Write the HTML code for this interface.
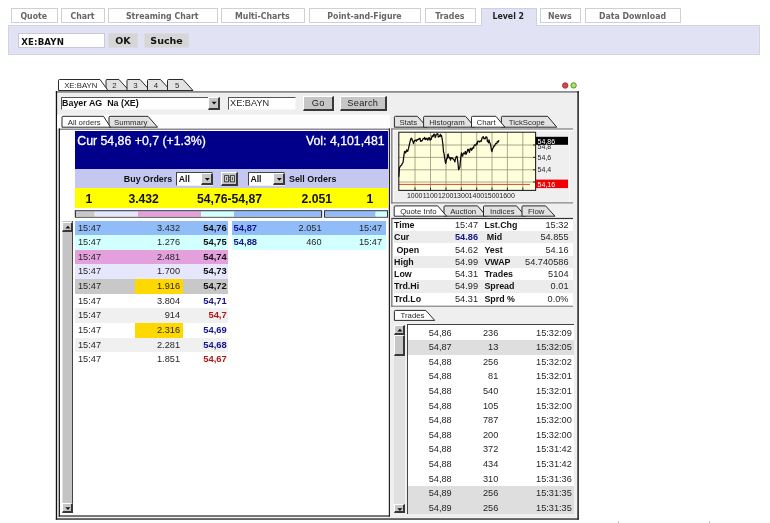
<!DOCTYPE html>
<html><head><meta charset="utf-8"><title>Level 2</title>
<style>
html,body{margin:0;padding:0;background:#fff;}
body{filter:blur(0.4px);width:770px;height:523px;position:relative;overflow:hidden;font-family:"Liberation Sans",sans-serif;font-size:9.2px;color:#222;}
.a{position:absolute;box-sizing:border-box;white-space:nowrap;}
.nt{border:1px solid #cfcfd6;background:#fff;font-family:"DejaVu Sans Condensed","DejaVu Sans",sans-serif;font-weight:bold;font-size:8.7px;color:#666;text-align:center;line-height:15.4px;text-indent:-1px;}
.nt.on{background:#e2e2f5;border-color:#cfcfe2;border-bottom:none;color:#222;}
.vb{font-family:"DejaVu Sans",sans-serif;font-weight:bold;font-size:8.6px;color:#111;}
.btn{background:#c6c6c6;border-top:1px solid #fff;border-left:1px solid #fff;border-right:2px solid #383838;border-bottom:2px solid #383838;text-align:center;color:#222;}
.r{text-align:right;}
.b{font-weight:bold;}
.row{left:0;width:100%;}
svg{position:absolute;overflow:visible;}
svg text{font-family:"Liberation Sans",sans-serif;}
</style></head><body>

<div class="a " style="left:8px;top:24.5px;width:751.5px;height:30.5px;background:#e2e2f5;border:1px solid #d2d2e6;"></div>
<div class="a nt" style="left:11px;top:7.5px;width:46.5px;height:15.2px;">Quote</div>
<div class="a nt" style="left:61.3px;top:7.5px;width:43.4px;height:15.2px;">Chart</div>
<div class="a nt" style="left:108px;top:7.5px;width:109.5px;height:15.2px;">Streaming Chart</div>
<div class="a nt" style="left:221px;top:7.5px;width:83.7px;height:15.2px;">Multi-Charts</div>
<div class="a nt" style="left:309px;top:7.5px;width:112px;height:15.2px;">Point-and-Figure</div>
<div class="a nt" style="left:424.7px;top:7.5px;width:51.3px;height:15.2px;">Trades</div>
<div class="a nt on" style="left:481px;top:7.5px;width:55.5px;height:18.5px;">Level 2</div>
<div class="a nt" style="left:540px;top:7.5px;width:40.5px;height:15.2px;">News</div>
<div class="a nt" style="left:585px;top:7.5px;width:96px;height:15.2px;">Data Download</div>
<div class="a vb" style="left:17.7px;top:33px;width:87.3px;height:15.4px;background:#fff;border:1px solid #c8c8d8;padding-left:2.6px;line-height:17.6px;letter-spacing:0.15px;">XE:BAYN</div>
<div class="a vb" style="left:108px;top:32.6px;width:29.8px;height:15.6px;background:#d6d6d6;border:1px solid #dadae2;text-align:center;line-height:14.6px;font-size:9.5px;">OK</div>
<div class="a vb" style="left:144.4px;top:32.6px;width:44.4px;height:15.6px;background:#d6d6d6;border:1px solid #dadae2;text-align:center;line-height:14.6px;font-size:9.5px;">Suche</div>
<svg style="left:560px;top:80px" width="20" height="12"><circle cx="5.2" cy="5.5" r="2.7" fill="#e04048" stroke="#b03038" stroke-width="1"/><circle cx="13.6" cy="5.4" r="2.7" fill="#a8e468" stroke="#5c9028" stroke-width="1"/></svg>
<svg style="left:0;top:0" width="770" height="523"><rect x="56" y="91.2" width="522.6" height="428.3" fill="#efefef"/><rect x="55.8" y="91.1" width="523.0" height="1.6" fill="#808080"/><rect x="55.8" y="91.1" width="1.3" height="428.6" fill="#111"/><rect x="577.4" y="91.1" width="1.4" height="428.6" fill="#111"/><rect x="55.8" y="518.4" width="523.0" height="1.3" fill="#222"/></svg>
<svg style="left:0;top:0" width="770" height="523"><path d="M106 90.5 L106 80.5 Q106 79.5 107 79.5 L119 79.5 L129 90.5 Z" fill="#e2e2e2" stroke="#2a2a2a" stroke-width="1"/><path d="M127 90.5 L127 80.5 Q127 79.5 128 79.5 L140 79.5 L150 90.5 Z" fill="#e2e2e2" stroke="#2a2a2a" stroke-width="1"/><path d="M147.5 90.5 L147.5 80.5 Q147.5 79.5 148.5 79.5 L160.5 79.5 L170.5 90.5 Z" fill="#e2e2e2" stroke="#2a2a2a" stroke-width="1"/><path d="M167.5 90.5 L167.5 80.5 Q167.5 79.5 168.5 79.5 L183 79.5 L193 90.5 Z" fill="#e2e2e2" stroke="#2a2a2a" stroke-width="1"/><path d="M58.5 90.5 L58.5 80.5 Q58.5 79.5 59.5 79.5 L100 79.5 L108 90.5 Z" fill="#fff" stroke="#2a2a2a" stroke-width="1"/><text x="80.75" y="87.9" font-size="7.8" text-anchor="middle" letter-spacing="0" fill="#2a2a2a">XE:BAYN</text><text x="114.3" y="87.9" font-size="7.8" text-anchor="middle" letter-spacing="0" fill="#2a2a2a">2</text><text x="135.3" y="87.9" font-size="7.8" text-anchor="middle" letter-spacing="0" fill="#2a2a2a">3</text><text x="155.8" y="87.9" font-size="7.8" text-anchor="middle" letter-spacing="0" fill="#2a2a2a">4</text><text x="177.05" y="87.9" font-size="7.8" text-anchor="middle" letter-spacing="0" fill="#2a2a2a">5</text></svg>
<div class="a " style="left:60.5px;top:96.5px;width:159.5px;height:13.5px;background:#fff;border-top:1.5px solid #555;border-left:1.5px solid #555;border-bottom:1px solid #f6f6f6;border-right:1px solid #f6f6f6;padding-left:0.6px;line-height:11.5px;font-size:8.9px;font-weight:bold;color:#111;">Bayer AG&nbsp; Na (XE)</div>
<div class="a btn" style="left:207.6px;top:97px;width:12.4px;height:12.8px;"><svg width="11" height="11" style="left:0;top:0"><path d="M2.6 3.8 L7.6 3.8 L5.1 6.6 Z" fill="#111"/></svg></div>
<div class="a " style="left:227.5px;top:96.5px;width:68.5px;height:13.5px;background:#fff;border-top:1.5px solid #555;border-left:1.5px solid #555;border-bottom:1px solid #f6f6f6;border-right:1px solid #f6f6f6;padding-left:1.5px;line-height:11.5px;font-size:9.2px;color:#262626;">XE:BAYN</div>
<div class="a btn" style="left:303px;top:95.6px;width:31.4px;height:15.2px;line-height:12px;font-size:9.2px;letter-spacing:0.3px;">Go</div>
<div class="a btn" style="left:340px;top:95.6px;width:46.6px;height:15.2px;line-height:12px;font-size:9.2px;letter-spacing:0.3px;">Search</div>
<svg style="left:0;top:0" width="770" height="523"><rect x="57.1" y="114.6" width="332.9" height="14.0" fill="#fdfdfd"/></svg>
<svg style="left:0;top:0" width="770" height="523"><path d="M109 127.2 L109 117.3 Q109 116.3 110 116.3 L148 116.3 L157.6 127.2 Z" fill="#e2e2e2" stroke="#2a2a2a" stroke-width="1"/><path d="M62 127.2 L62 117.3 Q62 116.3 63 116.3 L103.5 116.3 L110.5 127.2 Z" fill="#fff" stroke="#2a2a2a" stroke-width="1"/><text x="84.25" y="124.60000000000001" font-size="7.8" text-anchor="middle" letter-spacing="0" fill="#2a2a2a">All orders</text><text x="130.7" y="124.60000000000001" font-size="7.8" text-anchor="middle" letter-spacing="0" fill="#2a2a2a">Summary</text></svg>
<svg style="left:0;top:0" width="770" height="523"><rect x="59" y="128.5" width="331" height="388.1" fill="#fff"/><rect x="58.7" y="128.5" width="331.3" height="1.5" fill="#8c8c8c"/><rect x="58.7" y="128.5" width="1.3" height="388.1" fill="#222"/><rect x="388.8" y="128.5" width="1.2" height="388.1" fill="#222"/><rect x="58.7" y="515.4" width="331.3" height="1.2" fill="#222"/></svg>
<div class="a " style="left:74.8px;top:130.6px;width:313.2px;height:38.4px;background:#00008b;"></div>
<div class="a " style="left:77.3px;top:133.6px;width:172.7px;height:16.4px;color:#fff;font-size:12.3px;line-height:14px;-webkit-text-stroke:0.3px #fff;">Cur 54,86 +0,7 (+1.3%)</div>
<div class="a " style="left:250px;top:133.6px;width:134.6px;height:16.4px;color:#fff;font-size:12.3px;line-height:14px;text-align:right;-webkit-text-stroke:0.3px #fff;">Vol: 4,101,481</div>
<div class="a " style="left:74.8px;top:169px;width:313.2px;height:19px;background:#c4c8f0;"></div>
<div class="a " style="left:100px;top:172.5px;width:72.2px;height:13.5px;font-weight:bold;font-size:8.9px;line-height:13px;text-align:right;color:#111;">Buy Orders</div>
<div class="a " style="left:289px;top:172.5px;width:71px;height:13.5px;font-weight:bold;font-size:8.9px;line-height:13px;color:#111;">Sell Orders</div>
<div class="a " style="left:176.3px;top:172px;width:37.0px;height:14px;background:#fff;border-top:1.5px solid #444;border-left:1.5px solid #444;border-bottom:1px solid #eee;border-right:1px solid #eee;padding-left:1.4px;line-height:12.2px;font-size:8.7px;font-weight:bold;color:#111;">All</div><div class="a btn" style="left:200.8px;top:173.2px;width:12.0px;height:12.1px;"><svg width="11" height="11" style="left:0;top:0"><path d="M2.8 4 L7.8 4 L5.3 6.8 Z" fill="#111"/></svg></div>
<div class="a " style="left:248px;top:172px;width:37.3px;height:14px;background:#fff;border-top:1.5px solid #444;border-left:1.5px solid #444;border-bottom:1px solid #eee;border-right:1px solid #eee;padding-left:1.4px;line-height:12.2px;font-size:8.7px;font-weight:bold;color:#111;">All</div><div class="a btn" style="left:272.8px;top:173.2px;width:12.0px;height:12.1px;"><svg width="11" height="11" style="left:0;top:0"><path d="M2.8 4 L7.8 4 L5.3 6.8 Z" fill="#111"/></svg></div>
<div class="a btn" style="left:221px;top:172.3px;width:16.8px;height:13.5px;"><svg width="15" height="12" style="left:0;top:0"><g fill="#d8d8d8" stroke="#333" stroke-width="0.9"><rect x="2.6" y="2.6" width="4" height="6.2"/><rect x="8.4" y="2.6" width="4" height="6.2"/><path d="M6.6 4.4h1.8M6.6 7h1.8M4.6 4.2v3M10.4 4.2v3"/></g></svg></div>
<div class="a " style="left:74.8px;top:188px;width:313.2px;height:19.8px;background:#ffff00;"></div>
<div class="a" style="font-weight:bold;font-size:12.2px;line-height:19.5px;color:#111;top:190px;left:75px;width:28px;text-align:center;">1</div>
<div class="a" style="font-weight:bold;font-size:12.2px;line-height:19.5px;color:#111;top:190px;left:128.4px;">3.432</div>
<div class="a" style="font-weight:bold;font-size:12.2px;line-height:19.5px;color:#111;top:190px;left:197px;">54,76-54,87</div>
<div class="a" style="font-weight:bold;font-size:12.2px;line-height:19.5px;color:#111;top:190px;left:301.6px;">2.051</div>
<div class="a" style="font-weight:bold;font-size:12.2px;line-height:19.5px;color:#111;top:190px;left:356px;width:28px;text-align:center;">1</div>
<svg style="left:0;top:0" width="770" height="523"><rect x="74.8" y="210.2" width="247.4" height="7.5" fill="#333"/><rect x="76.0" y="211.5" width="245.0" height="5.1" fill="#fff"/></svg><svg style="left:0;top:0" width="770" height="523"><rect x="76" y="211.5" width="18.6" height="5.1" fill="#c8c8c8"/></svg><svg style="left:0;top:0" width="770" height="523"><rect x="94.6" y="211.5" width="43.4" height="5.1" fill="#e6e6fc"/></svg><svg style="left:0;top:0" width="770" height="523"><rect x="138" y="211.5" width="63" height="5.1" fill="#e4a0dc"/></svg><svg style="left:0;top:0" width="770" height="523"><rect x="201" y="211.5" width="33" height="5.1" fill="#d2ffff"/></svg><svg style="left:0;top:0" width="770" height="523"><rect x="234" y="211.5" width="87" height="5.1" fill="#90bcf8"/></svg>
<svg style="left:0;top:0" width="770" height="523"><rect x="324" y="210.2" width="64" height="7.5" fill="#333"/><rect x="325.2" y="211.5" width="61.6" height="5.1" fill="#fff"/></svg><svg style="left:0;top:0" width="770" height="523"><rect x="325" y="211.5" width="50.6" height="5.1" fill="#90bcf8"/></svg><svg style="left:0;top:0" width="770" height="523"><rect x="375.6" y="211.5" width="11.4" height="5.1" fill="#d2ffff"/></svg>
<div class="a " style="left:61.6px;top:221px;width:11.4px;height:292px;background:#c4c4c4;border-right:1.5px solid #444;border-left:1px solid #ddd;"></div>
<div class="a btn" style="left:61.6px;top:221.5px;width:11.4px;height:10.0px;"><svg width="10" height="9" style="left:0;top:0"><path d="M2.4 5.6 L7.4 5.6 L4.9 2.8 Z" fill="#111"/></svg></div>
<div class="a btn" style="left:61.6px;top:502.6px;width:11.4px;height:10.0px;"><svg width="10" height="9" style="left:0;top:0"><path d="M2.4 3.2 L7.4 3.2 L4.9 6 Z" fill="#111"/></svg></div>
<div class="a " style="left:75px;top:220.5px;width:153.4px;height:14.63px;background:#90bcf8;"></div>
<div class="a" style="top:220.5px;line-height:14.63px;font-size:9.2px;color:#262626;left:78px;">15:47</div>
<div class="a r" style="top:220.5px;line-height:14.63px;font-size:9.2px;color:#262626;left:130px;width:50px;">3.432</div>
<div class="a r b" style="top:220.5px;line-height:14.63px;font-size:9.2px;color:#262626;left:190px;width:36.7px;font-size:9.4px;color:#111;">54,76</div>
<div class="a " style="left:75px;top:235.13px;width:153.4px;height:14.63px;background:#d2ffff;"></div>
<div class="a" style="top:235.13px;line-height:14.63px;font-size:9.2px;color:#262626;left:78px;">15:47</div>
<div class="a r" style="top:235.13px;line-height:14.63px;font-size:9.2px;color:#262626;left:130px;width:50px;">1.276</div>
<div class="a r b" style="top:235.13px;line-height:14.63px;font-size:9.2px;color:#262626;left:190px;width:36.7px;font-size:9.4px;color:#111;">54,75</div>
<div class="a " style="left:75px;top:249.76px;width:153.4px;height:14.63px;background:#e4a0dc;"></div>
<div class="a" style="top:249.76px;line-height:14.63px;font-size:9.2px;color:#262626;left:78px;">15:47</div>
<div class="a r" style="top:249.76px;line-height:14.63px;font-size:9.2px;color:#262626;left:130px;width:50px;">2.481</div>
<div class="a r b" style="top:249.76px;line-height:14.63px;font-size:9.2px;color:#262626;left:190px;width:36.7px;font-size:9.4px;color:#111;">54,74</div>
<div class="a " style="left:75px;top:264.39px;width:153.4px;height:14.63px;background:#e6e6fc;"></div>
<div class="a" style="top:264.39px;line-height:14.63px;font-size:9.2px;color:#262626;left:78px;">15:47</div>
<div class="a r" style="top:264.39px;line-height:14.63px;font-size:9.2px;color:#262626;left:130px;width:50px;">1.700</div>
<div class="a r b" style="top:264.39px;line-height:14.63px;font-size:9.2px;color:#262626;left:190px;width:36.7px;font-size:9.4px;color:#111;">54,73</div>
<div class="a " style="left:75px;top:279.02px;width:153.4px;height:14.63px;background:#c8c8c8;"></div>
<div class="a " style="left:135.2px;top:279.02px;width:47.8px;height:14.63px;background:#ffd800;"></div>
<div class="a" style="top:279.02px;line-height:14.63px;font-size:9.2px;color:#262626;left:78px;">15:47</div>
<div class="a r" style="top:279.02px;line-height:14.63px;font-size:9.2px;color:#262626;left:130px;width:50px;">1.916</div>
<div class="a r b" style="top:279.02px;line-height:14.63px;font-size:9.2px;color:#262626;left:190px;width:36.7px;font-size:9.4px;color:#111;">54,72</div>
<div class="a " style="left:75px;top:293.65px;width:153.4px;height:14.63px;background:#fff;"></div>
<div class="a" style="top:293.65px;line-height:14.63px;font-size:9.2px;color:#262626;left:78px;">15:47</div>
<div class="a r" style="top:293.65px;line-height:14.63px;font-size:9.2px;color:#262626;left:130px;width:50px;">3.804</div>
<div class="a r b" style="top:293.65px;line-height:14.63px;font-size:9.2px;color:#262626;left:190px;width:36.7px;font-size:9.4px;color:#14148c;">54,71</div>
<div class="a " style="left:75px;top:308.28px;width:153.4px;height:14.63px;background:#f0f0f0;"></div>
<div class="a" style="top:308.28px;line-height:14.63px;font-size:9.2px;color:#262626;left:78px;">15:47</div>
<div class="a r" style="top:308.28px;line-height:14.63px;font-size:9.2px;color:#262626;left:130px;width:50px;">914</div>
<div class="a r b" style="top:308.28px;line-height:14.63px;font-size:9.2px;color:#262626;left:190px;width:36.7px;font-size:9.4px;color:#b01818;">54,7</div>
<div class="a " style="left:75px;top:322.91px;width:153.4px;height:14.63px;background:#fff;"></div>
<div class="a " style="left:135.2px;top:322.91px;width:47.8px;height:14.63px;background:#ffd800;"></div>
<div class="a" style="top:322.91px;line-height:14.63px;font-size:9.2px;color:#262626;left:78px;">15:47</div>
<div class="a r" style="top:322.91px;line-height:14.63px;font-size:9.2px;color:#262626;left:130px;width:50px;">2.316</div>
<div class="a r b" style="top:322.91px;line-height:14.63px;font-size:9.2px;color:#262626;left:190px;width:36.7px;font-size:9.4px;color:#14148c;">54,69</div>
<div class="a " style="left:75px;top:337.54px;width:153.4px;height:14.63px;background:#f0f0f0;"></div>
<div class="a" style="top:337.54px;line-height:14.63px;font-size:9.2px;color:#262626;left:78px;">15:47</div>
<div class="a r" style="top:337.54px;line-height:14.63px;font-size:9.2px;color:#262626;left:130px;width:50px;">2.281</div>
<div class="a r b" style="top:337.54px;line-height:14.63px;font-size:9.2px;color:#262626;left:190px;width:36.7px;font-size:9.4px;color:#14148c;">54,68</div>
<div class="a " style="left:75px;top:352.17px;width:153.4px;height:14.63px;background:#fff;"></div>
<div class="a" style="top:352.17px;line-height:14.63px;font-size:9.2px;color:#262626;left:78px;">15:47</div>
<div class="a r" style="top:352.17px;line-height:14.63px;font-size:9.2px;color:#262626;left:130px;width:50px;">1.851</div>
<div class="a r b" style="top:352.17px;line-height:14.63px;font-size:9.2px;color:#262626;left:190px;width:36.7px;font-size:9.4px;color:#b01818;">54,67</div>
<div class="a " style="left:232px;top:220.5px;width:154px;height:14.63px;background:#90bcf8;"></div>
<div class="a b" style="top:220.5px;line-height:14.63px;font-size:9.2px;color:#262626;left:233.6px;font-size:9.4px;color:#14148c;">54,87</div>
<div class="a r" style="top:220.5px;line-height:14.63px;font-size:9.2px;color:#262626;left:271.6px;width:50px;">2.051</div>
<div class="a r" style="top:220.5px;line-height:14.63px;font-size:9.2px;color:#262626;left:332px;width:50px;">15:47</div>
<div class="a " style="left:232px;top:235.13px;width:154px;height:14.63px;background:#d2ffff;"></div>
<div class="a b" style="top:235.13px;line-height:14.63px;font-size:9.2px;color:#262626;left:233.6px;font-size:9.4px;color:#14148c;">54,88</div>
<div class="a r" style="top:235.13px;line-height:14.63px;font-size:9.2px;color:#262626;left:271.6px;width:50px;">460</div>
<div class="a r" style="top:235.13px;line-height:14.63px;font-size:9.2px;color:#262626;left:332px;width:50px;">15:47</div>
<svg style="left:0;top:0" width="770" height="523"><path d="M394.4 127.2 L394.4 117.3 Q394.4 116.3 395.4 116.3 L417.4 116.3 L427 127.2 Z" fill="#e2e2e2" stroke="#2a2a2a" stroke-width="1"/><path d="M423.6 127.2 L423.6 117.3 Q423.6 116.3 424.6 116.3 L465.5 116.3 L475 127.2 Z" fill="#e2e2e2" stroke="#2a2a2a" stroke-width="1"/><path d="M501.4 127.2 L501.4 117.3 Q501.4 116.3 502.4 116.3 L547.6 116.3 L556.8 127.2 Z" fill="#e2e2e2" stroke="#2a2a2a" stroke-width="1"/><path d="M471.5 127.2 L471.5 117.3 Q471.5 116.3 472.5 116.3 L495.9 116.3 L505 127.2 Z" fill="#fff" stroke="#2a2a2a" stroke-width="1"/><text x="408.29999999999995" y="124.60000000000001" font-size="7.8" text-anchor="middle" letter-spacing="0" fill="#2a2a2a">Stats</text><text x="446.95" y="124.60000000000001" font-size="7.8" text-anchor="middle" letter-spacing="0" fill="#2a2a2a">Histogram</text><text x="486.09999999999997" y="124.60000000000001" font-size="7.8" text-anchor="middle" letter-spacing="0" fill="#2a2a2a">Chart</text><text x="526.9" y="124.60000000000001" font-size="7.8" text-anchor="middle" letter-spacing="0" fill="#2a2a2a">TickScope</text></svg>
<svg style="left:0;top:0" width="770" height="523"><rect x="398.6" y="132" width="137.2" height="58" fill="#ffffdc"/><path d="M415 132V190" stroke="#94947c" stroke-width="0.8"/><path d="M415 187.5V190.5" stroke="#222" stroke-width="0.9"/><path d="M430.5 132V190" stroke="#94947c" stroke-width="0.8"/><path d="M430.5 187.5V190.5" stroke="#222" stroke-width="0.9"/><path d="M446 132V190" stroke="#94947c" stroke-width="0.8"/><path d="M446 187.5V190.5" stroke="#222" stroke-width="0.9"/><path d="M461.3 132V190" stroke="#94947c" stroke-width="0.8"/><path d="M461.3 187.5V190.5" stroke="#222" stroke-width="0.9"/><path d="M476.7 132V190" stroke="#94947c" stroke-width="0.8"/><path d="M476.7 187.5V190.5" stroke="#222" stroke-width="0.9"/><path d="M492 132V190" stroke="#94947c" stroke-width="0.8"/><path d="M492 187.5V190.5" stroke="#222" stroke-width="0.9"/><path d="M507.4 132V190" stroke="#94947c" stroke-width="0.8"/><path d="M507.4 187.5V190.5" stroke="#222" stroke-width="0.9"/><path d="M522.8 132V190" stroke="#94947c" stroke-width="0.8"/><path d="M522.8 187.5V190.5" stroke="#222" stroke-width="0.9"/><path d="M398.6 145H535.8" stroke="#94947c" stroke-width="0.8"/><path d="M533 145H536" stroke="#222" stroke-width="0.9"/><path d="M398.6 157.4H535.8" stroke="#94947c" stroke-width="0.8"/><path d="M533 157.4H536" stroke="#222" stroke-width="0.9"/><path d="M398.6 169.8H535.8" stroke="#94947c" stroke-width="0.8"/><path d="M533 169.8H536" stroke="#222" stroke-width="0.9"/><path d="M398.6 182H535.8" stroke="#94947c" stroke-width="0.8"/><path d="M533 182H536" stroke="#222" stroke-width="0.9"/><path d="M398.6 184.4H530" stroke="#e03010" stroke-width="0.9"/><rect x="398.8" y="132.2" width="136.8" height="58.2" fill="none" stroke="#222" stroke-width="1.1"/><polyline points="398.8,176.7 399.1,172.2 399.4,167.9 400.4,166.1 400.9,165.6 401.5,165.2 402.2,163.6 403.0,162.7 403.5,159.0 403.8,156.1 404.6,151.3 405.1,151.9 405.7,152.9 406.6,149.9 407.1,151.3 407.7,151.2 408.5,148.5 409.2,145.4 410.0,141.9 410.8,138.7 411.3,138.2 411.8,138.5 412.4,140.9 412.9,141.0 413.5,143.6 414.1,141.6 414.7,140.3 415.3,140.5 415.9,140.1 416.5,141.1 417.0,139.7 417.6,139.9 418.2,139.1 418.8,139.4 419.4,138.5 420.0,138.2 420.5,141.1 421.1,141.4 421.7,140.6 422.3,140.6 422.9,139.0 423.5,138.4 424.1,138.8 424.6,137.4 425.2,139.7 425.8,138.3 426.4,139.0 427.0,138.2 427.6,140.1 428.1,139.8 428.7,137.9 429.3,137.7 429.9,140.2 430.5,138.8 431.1,139.6 431.6,137.8 432.1,135.7 432.6,136.4 433.1,136.7 433.7,134.4 434.2,134.2 434.7,134.6 435.2,137.3 435.7,136.6 436.3,134.3 436.8,134.1 437.3,133.9 437.8,133.7 438.3,137.1 438.9,136.6 439.4,136.4 439.9,135.3 440.4,134.3 440.9,136.5 441.5,135.5 442.0,138.0 442.8,143.5 443.5,151.7 444.1,153.9 444.6,157.8 445.6,163.3 446.1,161.8 446.6,158.6 447.2,158.6 447.7,154.7 448.2,154.0 448.8,157.3 449.3,158.2 449.9,157.5 450.5,160.2 451.1,158.1 451.6,157.7 452.1,158.4 452.6,158.2 453.1,158.9 453.7,159.9 454.3,159.8 454.9,162.0 455.5,158.7 456.0,157.4 456.5,156.4 457.1,156.4 458.0,163.3 458.6,169.7 459.3,168.4 459.9,167.1 460.7,157.7 461.5,152.9 462.1,155.9 462.7,156.1 463.2,153.7 463.8,153.0 464.3,153.7 464.8,153.8 465.3,151.4 465.9,154.1 466.4,153.9 467.1,151.8 467.7,149.4 468.3,149.3 468.9,151.2 469.5,152.4 470.0,148.8 470.5,149.0 471.0,148.1 471.5,150.3 472.0,149.6 472.6,148.3 473.1,147.3 473.6,148.2 474.1,145.4 474.6,144.9 475.2,144.9 475.7,145.5 476.2,144.2 476.7,143.0 477.2,144.2 477.8,141.2 478.3,141.1 478.8,141.2 479.3,142.0 479.8,141.9 480.4,140.8 480.9,141.0 481.4,141.0 482.0,138.1 482.6,137.3 483.3,136.7 483.8,138.7 484.3,138.3 484.8,138.8 485.3,138.6 485.9,136.8 486.4,137.2 486.9,137.2 487.4,141.3 487.9,141.2 488.5,142.8 489.0,139.8 489.5,141.9 490.1,143.2 490.7,145.1 491.4,150.0 492.0,151.6 492.6,148.9 493.2,147.7 493.9,145.9 494.5,146.2 495.1,144.8 495.7,143.5 496.3,143.7 496.8,143.6 497.3,141.5 497.8,141.8 498.3,142.0 498.9,140.1" fill="none" stroke="#0a0a0a" stroke-width="1.25" stroke-linejoin="round"/><text x="414.7" y="198.3" font-size="7" text-anchor="middle" fill="#222">1000</text><text x="430.2" y="198.3" font-size="7" text-anchor="middle" fill="#222">1100</text><text x="445.7" y="198.3" font-size="7" text-anchor="middle" fill="#222">1200</text><text x="461.0" y="198.3" font-size="7" text-anchor="middle" fill="#222">1300</text><text x="476.4" y="198.3" font-size="7" text-anchor="middle" fill="#222">1400</text><text x="491.7" y="198.3" font-size="7" text-anchor="middle" fill="#222">1500</text><text x="507.09999999999997" y="198.3" font-size="7" text-anchor="middle" fill="#222">1600</text><text x="537.6" y="148.5" font-size="7" fill="#222">54,8</text><text x="537.6" y="160" font-size="7" fill="#222">54,6</text><text x="537.6" y="172.3" font-size="7" fill="#222">54,4</text><rect x="535.8" y="136.8" width="32.2" height="8" fill="#000"/><text x="537.6" y="143.8" font-size="7" fill="#fff">54,86</text><rect x="535.8" y="179.6" width="32.2" height="8.5" fill="#f00000"/><text x="537.6" y="186.6" font-size="7" fill="#fff">54,16</text></svg>
<svg style="left:0;top:0" width="770" height="523"><path d="M444 216.2 L444 206.9 Q444 205.9 445 205.9 L477.5 205.9 L486.5 216.2 Z" fill="#e2e2e2" stroke="#2a2a2a" stroke-width="1"/><path d="M483.5 216.2 L483.5 206.9 Q483.5 205.9 484.5 205.9 L516.5 205.9 L525.5 216.2 Z" fill="#e2e2e2" stroke="#2a2a2a" stroke-width="1"/><path d="M522 216.2 L522 206.9 Q522 205.9 523 205.9 L545.6 205.9 L555 216.2 Z" fill="#e2e2e2" stroke="#2a2a2a" stroke-width="1"/><path d="M394.2 216.2 L394.2 206.9 Q394.2 205.9 395.2 205.9 L437.7 205.9 L446.6 216.2 Z" fill="#fff" stroke="#2a2a2a" stroke-width="1"/><text x="418.34999999999997" y="213.6" font-size="7.8" text-anchor="middle" letter-spacing="0" fill="#2a2a2a">Quote Info</text><text x="463.15" y="213.6" font-size="7.8" text-anchor="middle" letter-spacing="0" fill="#2a2a2a">Auction</text><text x="502.4" y="213.6" font-size="7.8" text-anchor="middle" letter-spacing="0" fill="#2a2a2a">Indices</text><text x="536.1999999999999" y="213.6" font-size="7.8" text-anchor="middle" letter-spacing="0" fill="#2a2a2a">Flow</text></svg>
<div class="a " style="left:392px;top:218px;width:181px;height:88px;background:#fff;"></div>
<div class="a " style="left:393.5px;top:218.9px;width:179.0px;height:12.3px;background:#fff;"></div>
<div class="a b" style="top:218.9px;line-height:12.3px;left:394px;font-size:8.9px;color:#111;">Time</div>
<div class="a r" style="top:218.9px;line-height:12.3px;left:428px;width:50px;font-size:9.2px;color:#262626;">15:47</div>
<div class="a b" style="top:218.9px;line-height:12.3px;left:484.4px;font-size:8.9px;color:#111;">Lst.Chg</div>
<div class="a r" style="top:218.9px;line-height:12.3px;left:508.5px;width:60px;font-size:9.2px;color:#262626;">15:32</div>
<div class="a " style="left:393.5px;top:231.20000000000002px;width:179.0px;height:12.3px;background:#ececec;"></div>
<div class="a b" style="top:231.2px;line-height:12.3px;left:394px;font-size:8.9px;color:#111;">Cur</div>
<div class="a r" style="top:231.2px;line-height:12.3px;left:428px;width:50px;font-size:9.2px;color:#14148c;font-weight:bold;">54.86</div>
<div class="a b" style="top:231.2px;line-height:12.3px;left:484.4px;font-size:8.9px;color:#111;">&nbsp;Mid</div>
<div class="a r" style="top:231.2px;line-height:12.3px;left:508.5px;width:60px;font-size:9.2px;color:#262626;">54.855</div>
<div class="a " style="left:393.5px;top:243.5px;width:179.0px;height:12.3px;background:#fff;"></div>
<div class="a b" style="top:243.5px;line-height:12.3px;left:394px;font-size:8.9px;color:#111;">&nbsp;Open</div>
<div class="a r" style="top:243.5px;line-height:12.3px;left:428px;width:50px;font-size:9.2px;color:#262626;">54.62</div>
<div class="a b" style="top:243.5px;line-height:12.3px;left:484.4px;font-size:8.9px;color:#111;">Yest</div>
<div class="a r" style="top:243.5px;line-height:12.3px;left:508.5px;width:60px;font-size:9.2px;color:#262626;">54.16</div>
<div class="a " style="left:393.5px;top:255.8px;width:179.0px;height:12.3px;background:#ececec;"></div>
<div class="a b" style="top:255.8px;line-height:12.3px;left:394px;font-size:8.9px;color:#111;">High</div>
<div class="a r" style="top:255.8px;line-height:12.3px;left:428px;width:50px;font-size:9.2px;color:#262626;">54.99</div>
<div class="a b" style="top:255.8px;line-height:12.3px;left:484.4px;font-size:8.9px;color:#111;">VWAP</div>
<div class="a r" style="top:255.8px;line-height:12.3px;left:508.5px;width:60px;font-size:9.2px;color:#262626;">54.740586</div>
<div class="a " style="left:393.5px;top:268.1px;width:179.0px;height:12.3px;background:#fff;"></div>
<div class="a b" style="top:268.1px;line-height:12.3px;left:394px;font-size:8.9px;color:#111;">Low</div>
<div class="a r" style="top:268.1px;line-height:12.3px;left:428px;width:50px;font-size:9.2px;color:#262626;">54.31</div>
<div class="a b" style="top:268.1px;line-height:12.3px;left:484.4px;font-size:8.9px;color:#111;">Trades</div>
<div class="a r" style="top:268.1px;line-height:12.3px;left:508.5px;width:60px;font-size:9.2px;color:#262626;">5104</div>
<div class="a " style="left:393.5px;top:280.4px;width:179.0px;height:12.3px;background:#ececec;"></div>
<div class="a b" style="top:280.4px;line-height:12.3px;left:394px;font-size:8.9px;color:#111;">Trd.Hi</div>
<div class="a r" style="top:280.4px;line-height:12.3px;left:428px;width:50px;font-size:9.2px;color:#262626;">54.99</div>
<div class="a b" style="top:280.4px;line-height:12.3px;left:484.4px;font-size:8.9px;color:#111;">Spread</div>
<div class="a r" style="top:280.4px;line-height:12.3px;left:508.5px;width:60px;font-size:9.2px;color:#262626;">0.01</div>
<div class="a " style="left:393.5px;top:292.70000000000005px;width:179.0px;height:12.3px;background:#fff;"></div>
<div class="a b" style="top:292.7px;line-height:12.3px;left:394px;font-size:8.9px;color:#111;">Trd.Lo</div>
<div class="a r" style="top:292.7px;line-height:12.3px;left:428px;width:50px;font-size:9.2px;color:#262626;">54.31</div>
<div class="a b" style="top:292.7px;line-height:12.3px;left:484.4px;font-size:8.9px;color:#111;">Sprd %</div>
<div class="a r" style="top:292.7px;line-height:12.3px;left:508.5px;width:60px;font-size:9.2px;color:#262626;">0.0%</div>
<svg style="left:0;top:0" width="770" height="523"><path d="M394.4 320.4 L394.4 311.4 Q394.4 310.4 395.4 310.4 L425.8 310.4 L434.7 320.4 Z" fill="#fff" stroke="#2a2a2a" stroke-width="1"/><text x="412.5" y="317.79999999999995" font-size="7.8" text-anchor="middle" letter-spacing="0" fill="#2a2a2a">Trades</text></svg>
<div class="a " style="left:394px;top:324.8px;width:11px;height:188.2px;background:#e0e0e0;"></div>
<div class="a btn" style="left:394px;top:324.8px;width:11px;height:10.0px;"><svg width="10" height="9" style="left:0;top:0"><path d="M2.4 5.6 L7.4 5.6 L4.9 2.8 Z" fill="#111"/></svg></div>
<div class="a btn" style="left:394px;top:334.8px;width:11px;height:20.8px;"></div>
<div class="a btn" style="left:394px;top:503.5px;width:11px;height:9.5px;"><svg width="10" height="9" style="left:0;top:0"><path d="M2.4 3.2 L7.4 3.2 L4.9 6 Z" fill="#111"/></svg></div>
<div class="a " style="left:406.5px;top:324.3px;width:167.0px;height:189.5px;background:#fff;border-top:1.5px solid #444;border-left:1.5px solid #444;"></div>
<div class="a " style="left:408px;top:325.6px;width:165.5px;height:14.6px;background:#fff;"></div>
<div class="a" style="top:325.6px;line-height:14.6px;font-size:9.2px;color:#262626;left:428.7px;">54,86</div>
<div class="a r" style="top:325.6px;line-height:14.6px;font-size:9.2px;color:#262626;left:458.3px;width:40px;">236</div>
<div class="a r" style="top:325.6px;line-height:14.6px;font-size:9.2px;color:#262626;left:521.8px;width:50px;">15:32:09</div>
<div class="a " style="left:408px;top:340.20000000000005px;width:165.5px;height:14.6px;background:#dedede;"></div>
<div class="a" style="top:340.2px;line-height:14.6px;font-size:9.2px;color:#262626;left:428.7px;">54,87</div>
<div class="a r" style="top:340.2px;line-height:14.6px;font-size:9.2px;color:#262626;left:458.3px;width:40px;">13</div>
<div class="a r" style="top:340.2px;line-height:14.6px;font-size:9.2px;color:#262626;left:521.8px;width:50px;">15:32:05</div>
<div class="a " style="left:408px;top:354.8px;width:165.5px;height:14.6px;background:#fff;"></div>
<div class="a" style="top:354.8px;line-height:14.6px;font-size:9.2px;color:#262626;left:428.7px;">54,88</div>
<div class="a r" style="top:354.8px;line-height:14.6px;font-size:9.2px;color:#262626;left:458.3px;width:40px;">256</div>
<div class="a r" style="top:354.8px;line-height:14.6px;font-size:9.2px;color:#262626;left:521.8px;width:50px;">15:32:02</div>
<div class="a " style="left:408px;top:369.40000000000003px;width:165.5px;height:14.6px;background:#fff;"></div>
<div class="a" style="top:369.4px;line-height:14.6px;font-size:9.2px;color:#262626;left:428.7px;">54,88</div>
<div class="a r" style="top:369.4px;line-height:14.6px;font-size:9.2px;color:#262626;left:458.3px;width:40px;">81</div>
<div class="a r" style="top:369.4px;line-height:14.6px;font-size:9.2px;color:#262626;left:521.8px;width:50px;">15:32:01</div>
<div class="a " style="left:408px;top:384.0px;width:165.5px;height:14.6px;background:#fff;"></div>
<div class="a" style="top:384.0px;line-height:14.6px;font-size:9.2px;color:#262626;left:428.7px;">54,88</div>
<div class="a r" style="top:384.0px;line-height:14.6px;font-size:9.2px;color:#262626;left:458.3px;width:40px;">540</div>
<div class="a r" style="top:384.0px;line-height:14.6px;font-size:9.2px;color:#262626;left:521.8px;width:50px;">15:32:01</div>
<div class="a " style="left:408px;top:398.6px;width:165.5px;height:14.6px;background:#fff;"></div>
<div class="a" style="top:398.6px;line-height:14.6px;font-size:9.2px;color:#262626;left:428.7px;">54,88</div>
<div class="a r" style="top:398.6px;line-height:14.6px;font-size:9.2px;color:#262626;left:458.3px;width:40px;">105</div>
<div class="a r" style="top:398.6px;line-height:14.6px;font-size:9.2px;color:#262626;left:521.8px;width:50px;">15:32:00</div>
<div class="a " style="left:408px;top:413.20000000000005px;width:165.5px;height:14.6px;background:#fff;"></div>
<div class="a" style="top:413.2px;line-height:14.6px;font-size:9.2px;color:#262626;left:428.7px;">54,88</div>
<div class="a r" style="top:413.2px;line-height:14.6px;font-size:9.2px;color:#262626;left:458.3px;width:40px;">787</div>
<div class="a r" style="top:413.2px;line-height:14.6px;font-size:9.2px;color:#262626;left:521.8px;width:50px;">15:32:00</div>
<div class="a " style="left:408px;top:427.8px;width:165.5px;height:14.6px;background:#fff;"></div>
<div class="a" style="top:427.8px;line-height:14.6px;font-size:9.2px;color:#262626;left:428.7px;">54,88</div>
<div class="a r" style="top:427.8px;line-height:14.6px;font-size:9.2px;color:#262626;left:458.3px;width:40px;">200</div>
<div class="a r" style="top:427.8px;line-height:14.6px;font-size:9.2px;color:#262626;left:521.8px;width:50px;">15:32:00</div>
<div class="a " style="left:408px;top:442.40000000000003px;width:165.5px;height:14.6px;background:#fff;"></div>
<div class="a" style="top:442.4px;line-height:14.6px;font-size:9.2px;color:#262626;left:428.7px;">54,88</div>
<div class="a r" style="top:442.4px;line-height:14.6px;font-size:9.2px;color:#262626;left:458.3px;width:40px;">372</div>
<div class="a r" style="top:442.4px;line-height:14.6px;font-size:9.2px;color:#262626;left:521.8px;width:50px;">15:31:42</div>
<div class="a " style="left:408px;top:457.0px;width:165.5px;height:14.6px;background:#fff;"></div>
<div class="a" style="top:457.0px;line-height:14.6px;font-size:9.2px;color:#262626;left:428.7px;">54,88</div>
<div class="a r" style="top:457.0px;line-height:14.6px;font-size:9.2px;color:#262626;left:458.3px;width:40px;">434</div>
<div class="a r" style="top:457.0px;line-height:14.6px;font-size:9.2px;color:#262626;left:521.8px;width:50px;">15:31:42</div>
<div class="a " style="left:408px;top:471.6px;width:165.5px;height:14.6px;background:#fff;"></div>
<div class="a" style="top:471.6px;line-height:14.6px;font-size:9.2px;color:#262626;left:428.7px;">54,88</div>
<div class="a r" style="top:471.6px;line-height:14.6px;font-size:9.2px;color:#262626;left:458.3px;width:40px;">310</div>
<div class="a r" style="top:471.6px;line-height:14.6px;font-size:9.2px;color:#262626;left:521.8px;width:50px;">15:31:36</div>
<div class="a " style="left:408px;top:486.20000000000005px;width:165.5px;height:14.6px;background:#dedede;"></div>
<div class="a" style="top:486.2px;line-height:14.6px;font-size:9.2px;color:#262626;left:428.7px;">54,89</div>
<div class="a r" style="top:486.2px;line-height:14.6px;font-size:9.2px;color:#262626;left:458.3px;width:40px;">256</div>
<div class="a r" style="top:486.2px;line-height:14.6px;font-size:9.2px;color:#262626;left:521.8px;width:50px;">15:31:35</div>
<div class="a " style="left:408px;top:500.8px;width:165.5px;height:13.0px;background:#dedede;"></div>
<div class="a" style="top:500.8px;line-height:14.6px;font-size:9.2px;color:#262626;left:428.7px;">54,89</div>
<div class="a r" style="top:500.8px;line-height:14.6px;font-size:9.2px;color:#262626;left:458.3px;width:40px;">256</div>
<div class="a r" style="top:500.8px;line-height:14.6px;font-size:9.2px;color:#262626;left:521.8px;width:50px;">15:31:35</div>
<svg style="left:0;top:0" width="770" height="523"><rect x="391.2" y="128.3" width="181.8" height="1.4" fill="#8c8c8c"/><rect x="392.6" y="129.9" width="180.4" height="1.3" fill="#fcfcfc"/><rect x="392.6" y="129.9" width="1.3" height="72.1" fill="#fcfcfc"/><rect x="391.2" y="202.2" width="181.8" height="1.3" fill="#8c8c8c"/><rect x="569" y="131.2" width="1" height="70.8" fill="#f8f8f8"/><rect x="391.2" y="217.9" width="181.8" height="1.2" fill="#333"/><rect x="391.2" y="305.6" width="181.8" height="1.3" fill="#8c8c8c"/><rect x="391.2" y="128.3" width="1.3" height="75.2" fill="#777"/><rect x="391.2" y="217.9" width="1.3" height="89.0" fill="#777"/></svg>
<div class="a " style="left:617.5px;top:520.5px;width:1.0px;height:2.5px;background:#bbb;"></div>
<div class="a " style="left:708.5px;top:520.5px;width:1.0px;height:2.5px;background:#bbb;"></div>
</body></html>
